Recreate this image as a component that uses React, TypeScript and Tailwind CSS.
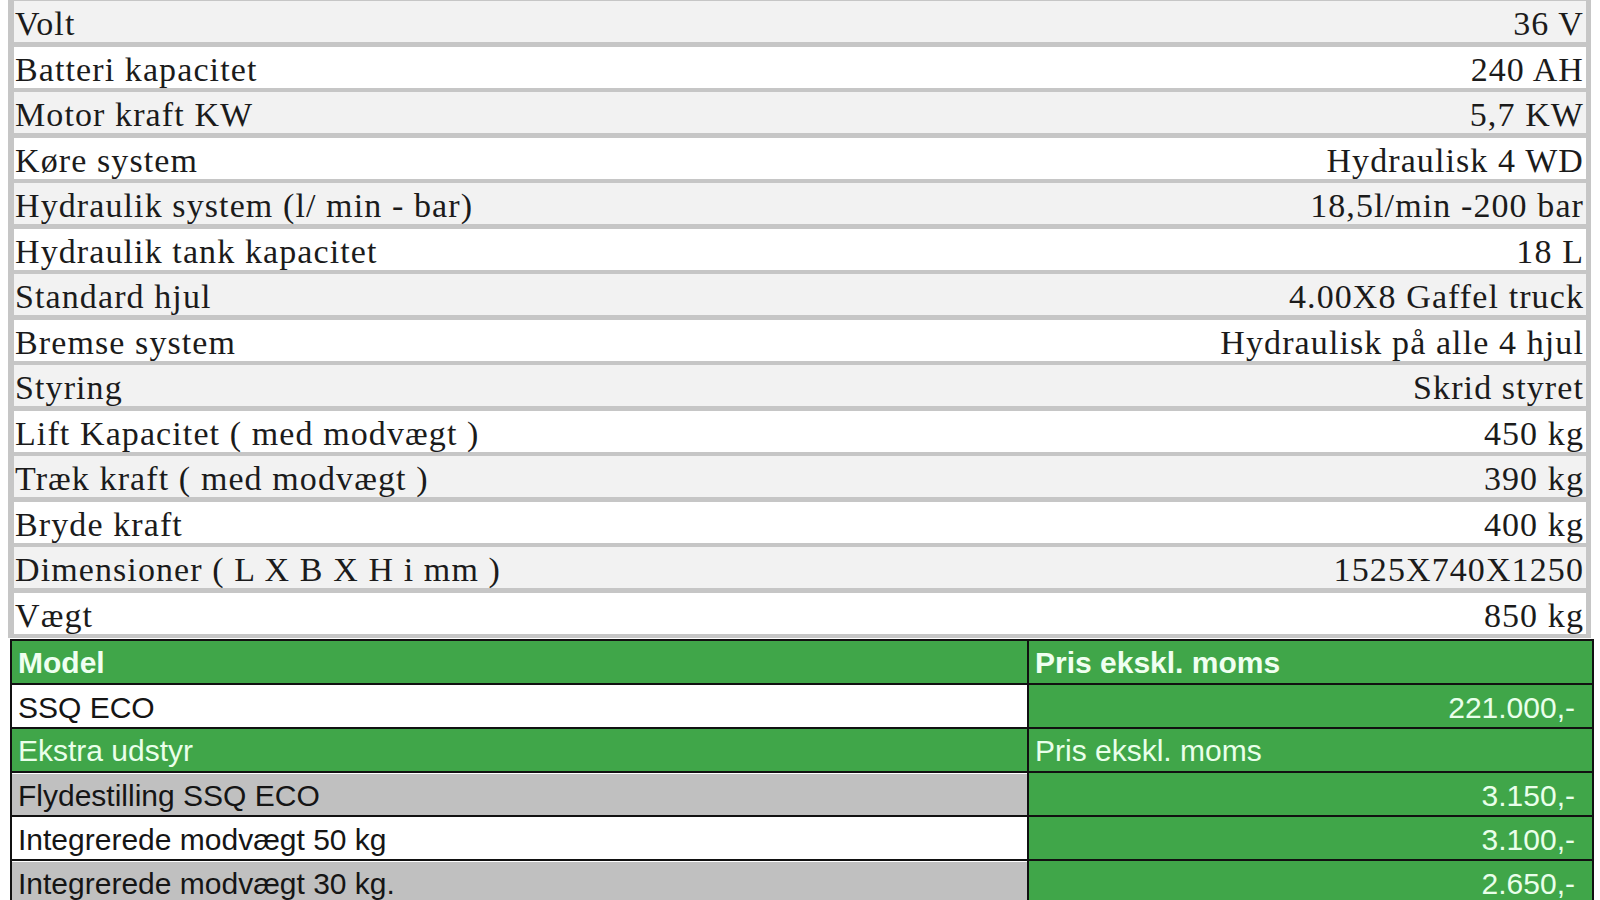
import React from 'react';

const specs: [string, string][] = [
  ['Volt', '36 V'],
  ['Batteri kapacitet', '240 AH'],
  ['Motor kraft KW', '5,7 KW'],
  ['Køre system', 'Hydraulisk 4 WD'],
  ['Hydraulik system (l/ min - bar)', '18,5l/min -200 bar'],
  ['Hydraulik tank kapacitet', '18 L'],
  ['Standard hjul', '4.00X8 Gaffel truck'],
  ['Bremse system', 'Hydraulisk på alle 4 hjul'],
  ['Styring', 'Skrid styret'],
  ['Lift Kapacitet ( med modvægt )', '450 kg'],
  ['Træk kraft ( med modvægt )', '390 kg'],
  ['Bryde kraft', '400 kg'],
  ['Dimensioner ( L X B X H i mm )', '1525X740X1250'],
  ['Vægt', '850 kg'],
];

const extras: { name: string; price: string; shade: boolean }[] = [
  { name: 'Flydestilling SSQ ECO', price: '3.150,-', shade: true },
  { name: 'Integrerede modvægt 50 kg', price: '3.100,-', shade: false },
  { name: 'Integrerede modvægt 30 kg.', price: '2.650,-', shade: true },
];

const App: React.FC = () => {
  return (
    <div className="w-[1600px] h-[900px] overflow-hidden bg-white">
      {/* Spec table */}
      <div className="ml-[8px] w-[1583px] bg-[#c6c6c6] pl-[6px] pr-[5px] pt-[1px] pb-[4px] flex flex-col gap-[4.5px]">
        {specs.map(([label, value], i) => (
          <div
            key={label}
            className={`h-[41px] flex justify-between pl-[1px] pr-[2px] text-[34px] leading-[45px] tracking-[1.1px] text-[#1b1b1b] whitespace-nowrap ${
              i % 2 === 0 ? 'bg-[#f2f2f2]' : 'bg-white'
            }`}
            style={{ fontFamily: '"Liberation Serif", "Times New Roman", serif' }}
          >
            <span>{label}</span>
            <span>{value}</span>
          </div>
        ))}
      </div>

      {/* Price table */}
      <div
        className="ml-[10px] mt-[1px] w-[1584px] bg-[#111] border-[2px] border-b-0 border-[#111] grid grid-cols-[1015px_1fr] gap-[2px] text-[30px] whitespace-nowrap"
        style={{ fontFamily: '"Liberation Sans", Arial, sans-serif' }}
      >
        <div className="h-[42px] bg-[#40a649] pl-[6px] leading-[44px] font-bold text-[#effff0]">Model</div>
        <div className="h-[42px] bg-[#40a649] pl-[6px] leading-[44px] font-bold text-[#effff0]">Pris ekskl. moms</div>

        <div className="h-[42px] bg-white pl-[6px] leading-[45px] text-[#151515]">SSQ ECO</div>
        <div className="h-[42px] bg-[#40a649] pr-[17px] leading-[45px] text-right text-[#e9ffea]">221.000,-</div>

        <div className="h-[42px] bg-[#40a649] pl-[6px] leading-[44px] text-[#e9ffea]">Ekstra udstyr</div>
        <div className="h-[42px] bg-[#40a649] pl-[6px] leading-[44px] text-[#e9ffea]">Pris ekskl. moms</div>

        {extras.map((e) => (
          <React.Fragment key={e.name}>
            <div
              className={`h-[42px] pl-[6px] leading-[44px] text-[#151515] border-t border-white ${
                e.shade ? 'bg-[#c0c0c0]' : 'bg-white'
              }`}
            >
              {e.name}
            </div>
            <div className="h-[42px] bg-[#40a649] pr-[17px] leading-[45px] text-right text-[#e9ffea]">{e.price}</div>
          </React.Fragment>
        ))}
      </div>
    </div>
  );
};

export default App;
